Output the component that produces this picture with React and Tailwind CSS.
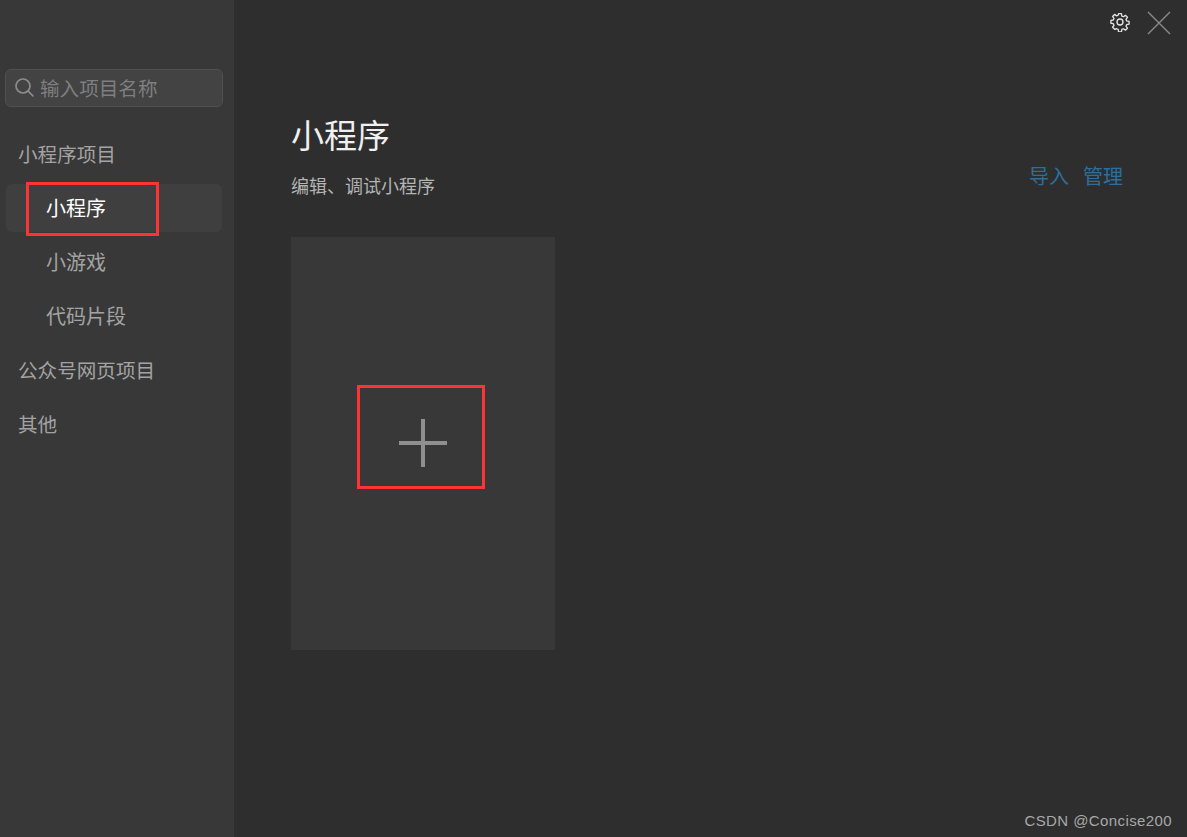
const font = '[font-family:"Noto_Sans_CJK_SC","Liberation_Sans",sans-serif]';

const NavGroup = ({children}) => (
    <div className="h-[54px] pl-[18px] flex items-center text-[19.6px] leading-none text-[#a3a3a3]">{children}</div>
);

const NavItem = ({children, active}) => (
    <div className="h-[54px] pl-[6px] flex items-center">
        <div className={active
            ? 'h-12 w-[216px] pl-10 flex items-center rounded-md bg-[#3f3f3f] text-[20px] leading-none text-white'
            : 'h-12 w-[216px] pl-10 flex items-center text-[20px] leading-none text-[#a3a3a3]'}
        >
            {children}
        </div>
    </div>
);

const Gear = () => (
    <svg width="20" height="20" viewBox="0 0 24 24" fill="none" stroke="#e4e4e4" strokeWidth="1.6" strokeLinejoin="round">
        <path d="M10.3 2h3.4l.5 2.9 1.9.8 2.4-1.7 2.4 2.4-1.7 2.4.8 1.9 2.9.5v3.4l-2.9.5-.8 1.9 1.7 2.4-2.4 2.4-2.4-1.7-1.9.8-.5 2.9h-3.4l-.5-2.9-1.9-.8L5.5 20.700l-2.400-2.400 1.700-2.400-.8-1.900L1.100 13.500v-3.400l2.900-.5.8-1.900L3.100 5.300l2.400-2.400 2.400 1.700 1.900-.8z" />
        <circle cx="12" cy="12" r="3.6" />
    </svg>
);

const Close = () => (
    <svg width="24" height="24" viewBox="0 0 24 24" fill="none" stroke="#8a8a8a" strokeWidth="1.4">
        <path d="M1 1l22 22M23 1L1 23" />
    </svg>
);

const Search = () => (
    <svg width="22" height="22" viewBox="0 0 22 22" fill="none" stroke="#8c8c8c" strokeWidth="1.7" strokeLinecap="round">
        <circle cx="9" cy="9" r="7" />
        <path d="M14.200 14.200l4.800 4.800" />
    </svg>
);

const App = () => (
    <div className={`relative w-[1187px] h-[837px] overflow-hidden flex bg-[#2e2e2e] ${font}`}>
        <aside className="w-[234px] shrink-0 bg-[#383838] pt-[69px]">
            <div className="ml-[5px] w-[218px] h-[38px] pl-[8px] flex items-center gap-[4px] rounded-md border border-[#505050] bg-[#434343] text-[19.6px] leading-none text-[#7f7f7f]">
                <Search />
                <span>输入项目名称</span>
            </div>
            <nav className="mt-5">
                <NavGroup>小程序项目</NavGroup>
                <NavItem active>小程序</NavItem>
                <NavItem>小游戏</NavItem>
                <NavItem>代码片段</NavItem>
                <NavGroup>公众号网页项目</NavGroup>
                <NavGroup>其他</NavGroup>
            </nav>
        </aside>

        <main className="flex-1 flex flex-col">
            <div className="h-[45px] pt-[11px] pr-[16px] flex justify-end items-start gap-[17px]">
                <span className="mt-[1px]"><Gear /></span>
                <Close />
            </div>
            <div className="pl-[57px] pr-[64px] pt-[70px] flex justify-between">
                <div>
                    <h1 className="h-[38px] flex items-center text-[33px] leading-none font-normal text-[#f0f0f0]">小程序</h1>
                    <p className="mt-[23px] text-[18px] leading-[18px] text-[#b4b4b4]">编辑、调试小程序</p>
                </div>
                <div className="mt-[49px] h-[24px] flex gap-[14px] text-[20px] leading-[24px] text-[#2c6f9c]">
                    <span>导入</span>
                    <span>管理</span>
                </div>
            </div>
            <div className="ml-[57px] mt-[43px] w-[264px] h-[413px] pb-px bg-[#383838] flex items-center justify-center">
                <div className="relative w-12 h-12">
                    <div className="absolute left-0 top-[22px] w-12 h-1 bg-[#8f8f8f]" />
                    <div className="absolute left-[22px] top-0 w-1 h-12 bg-[#8f8f8f]" />
                </div>
            </div>
        </main>

        {/* red annotation boxes */}
        <div className="absolute left-[26px] top-[182px] w-[133px] h-[54px] border-[3px] border-[#fc3434]" />
        <div className="absolute left-[357px] top-[385px] w-[128px] h-[104px] border-[3px] border-[#fc3434]" />

        <div className='absolute right-[15px] top-[812px] text-[15px] leading-[18px] tracking-[0.4px] text-[#a8a8a8] [font-family:"Liberation_Sans",sans-serif]'>CSDN @Concise200</div>
    </div>
);

export default App;
